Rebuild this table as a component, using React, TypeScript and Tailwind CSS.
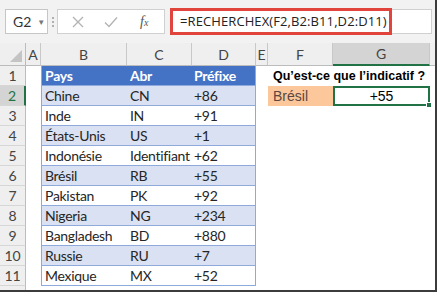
import React from "react";

const data = [
  ["Pays", "Abr", "Préfixe"],
  ["Chine", "CN", "+86"],
  ["Inde", "IN", "+91"],
  ["États-Unis", "US", "+1"],
  ["Indonésie", "Identifiant", "+62"],
  ["Brésil", "RB", "+55"],
  ["Pakistan", "PK", "+92"],
  ["Nigeria", "NG", "+234"],
  ["Bangladesh", "BD", "+880"],
  ["Russie", "RU", "+7"],
  ["Mexique", "MX", "+52"],
];

const calibri = "font-['Lato','Liberation_Sans',sans-serif]";
const arial = "font-['Liberation_Sans',Arial,sans-serif]";

function ColHeader({ label, selected }: { label: string; selected?: boolean }) {
  return (
    <div
      className={`flex items-center justify-center border-r border-[#c8c8c8] text-[14px] text-[#444] ${calibri} ${
        selected ? "bg-[#d4d4d4] border-b-2 border-b-[#217346]" : "bg-[#efefef] border-b border-b-[#bcbcbc]"
      }`}
    >
      {label}
    </div>
  );
}

export default function App() {
  return (
    <div className="w-[437px] h-[292px] overflow-hidden bg-white border-r-2 border-b-2 border-[#3c3c3c] flex flex-col">
      {/* formula bar */}
      <div className="h-[43px] shrink-0 bg-[#f2f2f2] flex items-center pl-[5px]">
        <div className={`w-[43px] h-[25px] bg-white border border-[#c6c6c6] flex items-center pl-[7px] text-[14px] text-[#333] ${calibri}`}>
          <span>G2</span>
          <span className="ml-[6px] text-[8px] text-[#777]">▼</span>
        </div>
        <div className="w-[9px] flex flex-col items-center gap-[2px]">
          <span className="w-[2px] h-[2px] bg-[#b0b0b0]" />
          <span className="w-[2px] h-[2px] bg-[#b0b0b0]" />
          <span className="w-[2px] h-[2px] bg-[#b0b0b0]" />
        </div>
        <div className="w-[108px] h-[25px] bg-white border border-[#d0d0d0] flex items-center">
          <svg width="12" height="12" viewBox="0 0 12 12" className="ml-[14px]">
            <path d="M1 1 L11 11 M11 1 L1 11" stroke="#b4b4b4" strokeWidth="1.4" fill="none" />
          </svg>
          <svg width="14" height="12" viewBox="0 0 14 12" className="ml-[20px]">
            <path d="M1 6.5 L5 10.5 L13 1.5" stroke="#b4b4b4" strokeWidth="1.4" fill="none" />
          </svg>
          <span className="ml-[22px] text-[14px] italic text-[#555] font-['Liberation_Serif',serif]">
            f<span className="text-[10px]">x</span>
          </span>
        </div>
        <div className="ml-[5px] w-[262px] h-[25px] bg-white border border-[#d0d0d0] flex items-center">
          <div className="w-[222px] h-[27px] -ml-px border-[3px] border-[#e0443c] flex items-center pl-[7px]">
            <span className="text-[13px] text-[#222] font-['Open_Sans',sans-serif] tracking-[0.1px] whitespace-nowrap">
              =RECHERCHEX(F2,B2:B11,D2:D11)
            </span>
          </div>
        </div>
      </div>

      {/* sheet */}
      <div className="flex-1 grid grid-cols-[26px_15px_86px_65px_64px_12px_65px_97px_1fr] grid-rows-[23px_repeat(11,20px)_1fr]">
        <div className="bg-[#efefef] border-r border-[#bcbcbc] border-b border-b-[#bcbcbc] relative">
          <svg width="12" height="12" viewBox="0 0 12 12" className="absolute right-[3px] bottom-[3px]">
            <polygon points="12,0 12,12 0,12" fill="#c4c4c4" />
          </svg>
        </div>
        <ColHeader label="A" />
        <ColHeader label="B" />
        <ColHeader label="C" />
        <ColHeader label="D" />
        <ColHeader label="E" />
        <ColHeader label="F" />
        <ColHeader label="G" selected />
        <div className="bg-[#efefef] border-b border-[#bcbcbc]" />

        {data.map((r, i) => {
          const n = i + 1;
          const head = i === 0;
          const band = !head && i % 2 === 1;
          const cellBg = head ? "bg-[#4472c4] text-white font-bold" : band ? "bg-[#d9e1f2] text-[#262626]" : "bg-white text-[#262626]";
          const cell = `flex items-center text-[14px] tracking-[-0.3px] ${calibri} ${cellBg} border-b border-[#8ea9db] whitespace-nowrap`;
          return (
            <React.Fragment key={n}>
              <div
                className={`flex items-center justify-center text-[14px] ${calibri} border-b border-[#d6d6d6] ${
                  n === 2
                    ? "bg-[#d4d4d4] text-[#217346] border-r-2 border-r-[#217346]"
                    : "bg-[#efefef] text-[#444] border-r border-r-[#bcbcbc]"
                }`}
              >
                {n}
              </div>
              <div />
              <div className={`${cell} pl-[3px] border-l`}>{r[0]}</div>
              <div className={`${cell} pl-[3px]`}>{r[1]}</div>
              <div className={`${cell} pl-[2px] border-r`}>{r[2]}</div>
              <div />
              {n === 1 && (
                <div className={`col-span-2 flex items-center pl-[5px] text-[12.5px] font-bold text-black whitespace-nowrap ${arial}`}>
                  Qu’est-ce que l’indicatif ?
                </div>
              )}
              {n === 2 && (
                <>
                  <div className={`flex items-center pl-[5px] bg-[#fcc89b] text-[14px] text-[#5a4740] ${arial}`}>Brésil</div>
                  <div className={`relative flex items-center justify-center border-2 border-[#217346] text-[14px] text-black ${arial}`}>
                    +55
                    <span className="absolute -right-[4px] -bottom-[4px] w-[6px] h-[6px] bg-[#217346] border border-white" />
                  </div>
                </>
              )}
              {n > 2 && (
                <>
                  <div />
                  <div />
                </>
              )}
              <div />
            </React.Fragment>
          );
        })}
        <div className="bg-[#efefef] border-r border-[#bcbcbc]" />
      </div>
    </div>
  );
}
